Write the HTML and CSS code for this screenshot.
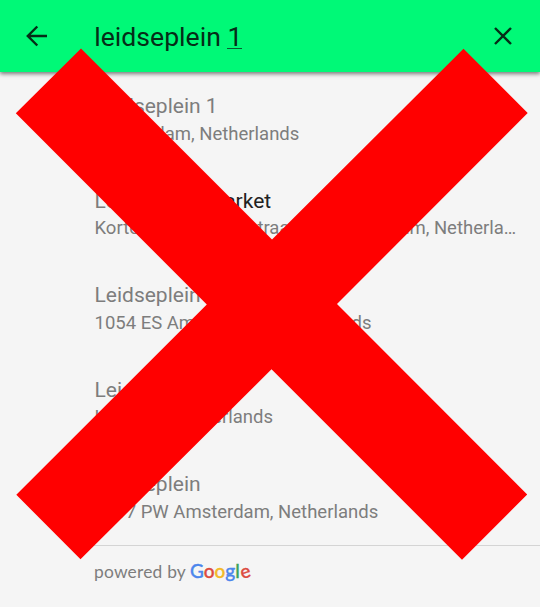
FILE: index.html
```html
<!DOCTYPE html>
<html lang="en">
<head>
<meta charset="utf-8">
<title>Place search</title>
<link rel="stylesheet" href="styles.css">
</head>
<body>
<header class="bar">
  <svg class="back" viewBox="0 0 22 22"><path d="M21 11H2M11.3 1.5 1.8 11l9.5 9.5"/></svg>
  <div class="query">leidseplein <span class="composing">1</span></div>
  <svg class="clear" viewBox="0 0 18 18"><path d="M1 1l16 16M17 1 1 17"/></svg>
</header>
<main class="results">
  <div class="row"><div class="name">Leidseplein 1</div><div class="address">Amsterdam, Netherlands</div></div>
  <div class="row"><div class="name">Leidseplein <span class="rest">Market</span></div><div class="address">Korte Leidsedwarsstraat 13, Amsterdam, Netherla…</div></div>
  <div class="row"><div class="name">Leidseplein</div><div class="address">1054 ES Amsterdam, Netherlands</div></div>
  <div class="row"><div class="name">Leidseplein</div><div class="address">Haarlem, Netherlands</div></div>
  <div class="row"><div class="name">Leidseplein</div><div class="address">1017 PW Amsterdam, Netherlands</div></div>
</main>
<footer class="credit"><span class="powered">powered by</span><span class="google"><span class="blue">G</span><span class="red">o</span><span class="yellow">o</span><span class="blue">g</span><span class="green">l</span><span class="red tilt">e</span></span></footer>
<svg class="cross" viewBox="0 0 540 607"><path d="M81 48.5 272 239.5 463.5 48.8 527.7 113 337 304 527.2 494.5 462 559.7 271.5 369.3 80.5 559.3 16.3 494.8 206.8 304.5 15.8 113.3Z"/></svg>
</body>
</html>
```
FILE: styles.css
```css
* { box-sizing: border-box; }
body {
  margin: 0;
  height: 607px;
  position: relative;
  overflow: hidden;
  background: #f5f5f5;
  color: #7d7d7d;
  font-family: Roboto, sans-serif;
}
.bar {
  height: 72px;
  display: flex;
  align-items: center;
  padding: 0 28px 0 26px;
  background: #00f977;
  box-shadow: 0 2px 4px rgba(0, 0, 0, .5);
  color: #052d17;
}
.bar svg { fill: none; stroke: #052d17; stroke-width: 2.4; }
.back { width: 22px; height: 22px; }
.query { flex: 1; margin-left: 46.3px; font-size: 26.6px; line-height: 30px; padding-top: 2px; }
.composing { display: inline-block; height: 27px; line-height: 30px; border-bottom: 1px solid #075c30; }
.clear { width: 18px; height: 18px; }
.results { height: 473px; padding-top: 21px; }
.row { height: 94.5px; padding: 0 0 0 94.5px; }
.name { font-size: 21px; line-height: 27px; white-space: nowrap; }
.rest { color: #212121; }
.address {
  padding-top: .5px;
  font-size: 18.5px;
  line-height: 27px;
  white-space: nowrap;
}
.credit {
  height: 62px;
  margin-left: 80px;
  padding: 12px 0 0 14px;
  border-top: 1px solid #d4d4d4;
  display: flex;
  align-items: baseline;
  font-family: Lato, sans-serif;
  font-size: 17.4px;
  line-height: 26px;
}
.powered { width: 96px; letter-spacing: .2px; }
.google { font-size: 19px; font-weight: 500; -webkit-text-stroke: .35px currentColor; }
.tilt { display: inline-block; transform: rotate(-15deg); }
.blue { color: #4c86ec; }
.red { color: #dc4b40; }
.yellow { color: #f3b928; }
.green { color: #3ca35a; }
.cross { position: absolute; left: 0; top: 0; width: 540px; height: 607px; fill: #f00; }
```
